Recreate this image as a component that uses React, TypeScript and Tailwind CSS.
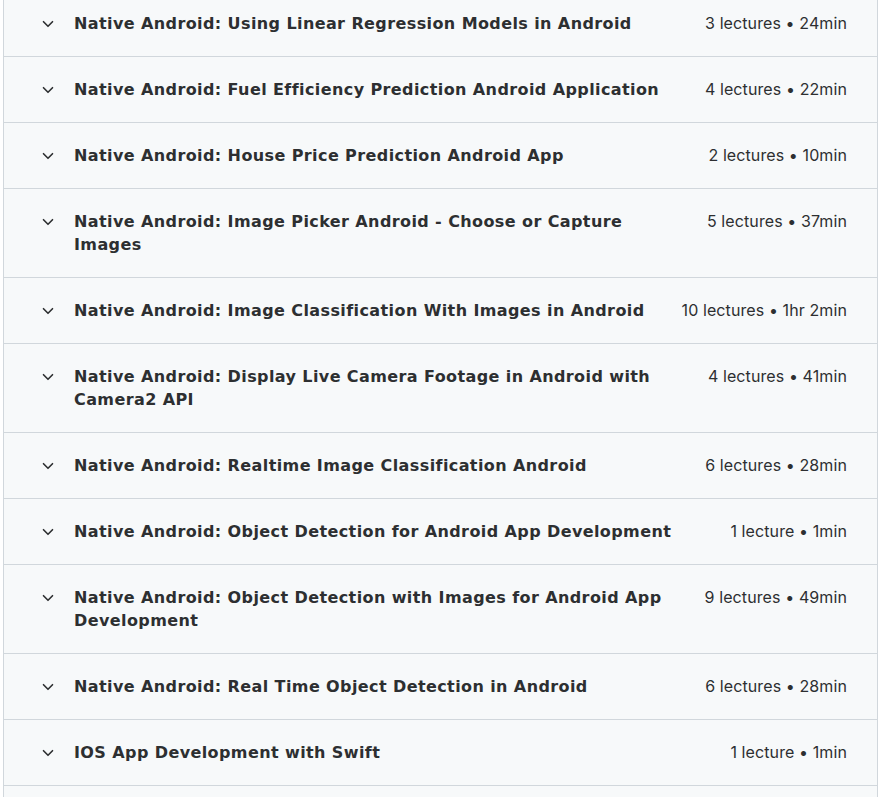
import { ChevronDown } from 'lucide-react'

const sections = [
  { title: 'Native Android: Using Linear Regression Models in Android', meta: '3 lectures • 24min' },
  { title: 'Native Android: Fuel Efficiency Prediction Android Application', meta: '4 lectures • 22min' },
  { title: 'Native Android: House Price Prediction Android App', meta: '2 lectures • 10min' },
  { title: 'Native Android: Image Picker Android - Choose or Capture Images', meta: '5 lectures • 37min' },
  { title: 'Native Android: Image Classification With Images in Android', meta: '10 lectures • 1hr 2min' },
  { title: 'Native Android: Display Live Camera Footage in Android with Camera2 API', meta: '4 lectures • 41min' },
  { title: 'Native Android: Realtime Image Classification Android', meta: '6 lectures • 28min' },
  { title: 'Native Android: Object Detection for Android App Development', meta: '1 lecture • 1min' },
  { title: 'Native Android: Object Detection with Images for Android App Development', meta: '9 lectures • 49min' },
  { title: 'Native Android: Real Time Object Detection in Android', meta: '6 lectures • 28min' },
  { title: 'IOS App Development with Swift', meta: '1 lecture • 1min' },
]

export default function App() {
  return (
    <div className="h-[797px] overflow-hidden bg-white font-['Inter',sans-serif] text-[#2d2f31]">
      <div className="ml-[3px] -mt-[9px] w-[875px] border-x border-[#d1d7dc] bg-[#f7f9fa]">
        {sections.map((s) => (
          <div
            key={s.title}
            className="flex items-start border-b border-[#d1d7dc] py-[21px] pl-[35px] pr-[30px]"
          >
            <ChevronDown className="mt-[3px] h-[18px] w-[18px] shrink-0" strokeWidth={2.2} />
            <div className="ml-[17px] flex-1 font-['DejaVu_Sans',sans-serif] text-base font-bold leading-[23px] tracking-[0.4px]">
              {s.title}
            </div>
            <div className="ml-8 shrink-0 text-base leading-[23px] tracking-[0.1px] text-[#2d2f31]">
              {s.meta}
            </div>
          </div>
        ))}
        {/* next section, scrolled below the fold */}
        <div className="h-[65px]" />
      </div>
    </div>
  )
}
